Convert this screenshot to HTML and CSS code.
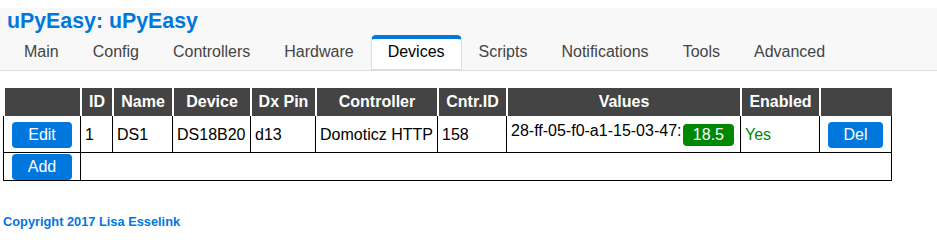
FILE: index.html
```html
<!DOCTYPE html>
<html lang="en">
<head>
    <meta charset="UTF-8">
    <meta name="viewport" content="width=device-width, initial-scale=1.0">
    <title>uPyEasy: Devices</title>
    <link rel="stylesheet" href="styles.css">
</head>
<body>
    <div class="headermenu">
        <h1>uPyEasy: uPyEasy</h1>
        <div class="menubar">
            <a class="menu" href="#">Main</a>
            <a class="menu" href="#">Config</a>
            <a class="menu" href="#">Controllers</a>
            <a class="menu" href="#">Hardware</a>
            <a class="menu active" href="#">Devices</a>
            <a class="menu" href="#">Scripts</a>
            <a class="menu" href="#">Notifications</a>
            <a class="menu" href="#">Tools</a>
            <a class="menu" href="#">Advanced</a>
        </div>
    </div>

    <table class="multirow">
        <colgroup>
            <col class="c-edit">
            <col class="c-id">
            <col class="c-name">
            <col class="c-device">
            <col class="c-pin">
            <col class="c-ctrl">
            <col class="c-idx">
            <col class="c-values">
            <col class="c-enabled">
            <col class="c-del">
        </colgroup>
        <tr>
            <th></th>
            <th>ID</th>
            <th>Name</th>
            <th>Device</th>
            <th>Dx Pin</th>
            <th>Controller</th>
            <th>Cntr.ID</th>
            <th>Values</th>
            <th>Enabled</th>
            <th></th>
        </tr>
        <tr>
            <td class="btncell"><a class="button" href="#">Edit</a></td>
            <td>1</td>
            <td>DS1</td>
            <td>DS18B20</td>
            <td>d13</td>
            <td>Domoticz HTTP</td>
            <td>158</td>
            <td class="values">
                <div class="valrow">
                    <div class="div_l">28-ff-05-f0-a1-15-03-47:</div>
                    <div class="div_r">18.5</div>
                </div>
            </td>
            <td class="enabled">Yes</td>
            <td class="btncell last"><a class="button small" href="#">Del</a></td>
        </tr>
        <tr class="addrow">
            <td class="btncell"><a class="button" href="#">Add</a></td>
            <td class="last" colspan="9"></td>
        </tr>
    </table>

    <div class="footer">Copyright 2017 Lisa Esselink</div>
</body>
</html>
```

FILE: styles.css
```css
body {
    margin: 0;
    font-family: "Liberation Sans", Arial, sans-serif;
    font-size: 16px;
    color: #000;
}
.headermenu {
    padding: 0 7px;
    background-color: #f8f8f8;
    border-bottom: 1px solid #ddd;
}
h1 {
    margin: 8px 0 1px;
    font-size: 21.33px;
    line-height: 26px;
    color: #07d;
    font-weight: bold;
}
.menubar {
    display: flex;
}
.menu {
    padding: 4px 16px 8px 16px;
    line-height: 18px;
    color: #444;
    white-space: nowrap;
    border: solid transparent;
    border-width: 4px 1px 1px;
    border-radius: 5px 5px 0 0;
    text-decoration: none;
}
.menu.active {
    color: #000;
    background-color: #fff;
    border-color: #07d #ddd #ddd;
}

/* device table */
table.multirow {
    width: 889px;
    margin: 17px 0 0 3px;
    table-layout: fixed;
    border-collapse: separate;
    border-spacing: 0;
    line-height: 18px;
}
.c-edit { width: 77px; }
.c-id { width: 32px; }
.c-name { width: 60px; }
.c-device { width: 78px; }
.c-pin { width: 65px; }
.c-ctrl { width: 122px; }
.c-idx { width: 69px; }
.c-values { width: 234px; }
.c-enabled { width: 79px; }
.c-del { width: 73px; }
th {
    padding: 5px 0;
    background-color: #444;
    color: #fff;
    font-weight: bold;
    border-left: 2px solid #fff;
    white-space: nowrap;
}
td {
    padding: 6px 4px 4px;
    border-left: 1px solid #000;
    border-bottom: 1px solid #000;
    white-space: nowrap;
}
td.last {
    border-right: 1px solid #000;
}
td.btncell {
    text-align: center;
}
td.values {
    vertical-align: top;
}
.addrow td {
    padding: 1px 4px 0;
}
.button {
    display: inline-block;
    padding: 4px 16px;
    color: #fff;
    background-color: #07d;
    border-radius: 4px;
    text-decoration: none;
}
.button.small {
    padding: 4px 15px;
}
.valrow {
    display: flex;
    justify-content: space-between;
    align-items: flex-start;
}
.div_l {
    overflow: hidden;
}
.div_r {
    flex: none;
    margin: 2px;
    padding: 2px 10px;
    border-radius: 4px;
    background-color: #080;
    color: #fff;
}
.enabled {
    color: #080;
}
.footer {
    margin: 33px 0 0 3px;
    font-size: 12.8px;
    font-weight: bold;
    color: #07d;
}
```
